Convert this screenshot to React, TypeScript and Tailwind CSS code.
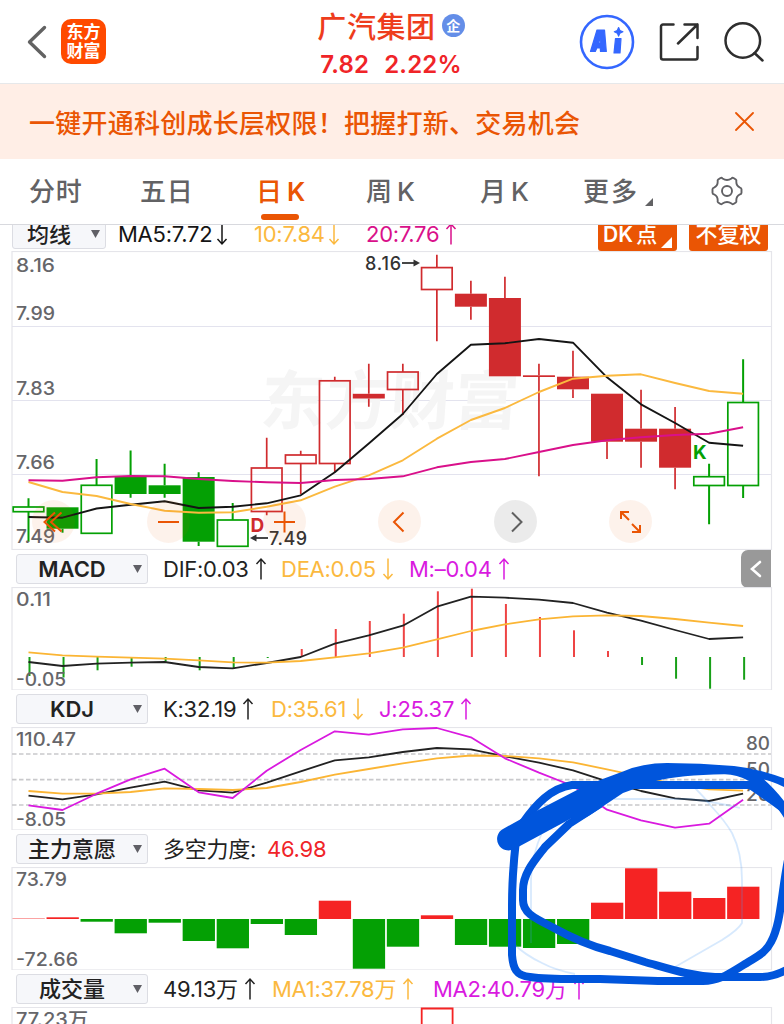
import React from "react";

const STEP = 34.03;
const cx = (i: number) => 28.5 + STEP * i;
const line = (ys: number[], offset = 0) =>
  ys.map((y, i) => `${(cx(i) + offset).toFixed(1)},${y}`).join(" ");

const GREEN = "#04a004";
const RED = "#d02b2e";
const ORANGE = "#ea5504";

type Candle = [number, number, number, number, "up" | "down", boolean];
// high, body top, body bottom, low, tone, hollow
const candles: Candle[] = [
  [498.3, 507, 511.7, 541.7, "down", true],
  [507.3, 507.3, 528.7, 532.7, "down", false],
  [459, 485.3, 533.3, 533.3, "down", true],
  [450.5, 476.7, 494, 497.7, "down", false],
  [463.7, 485.3, 494, 497.7, "down", false],
  [472.3, 477, 541.7, 546, "down", false],
  [503, 520, 546.3, 546.3, "down", true],
  [437.7, 468, 511.5, 515.3, "up", true],
  [450.7, 455, 463.5, 494, "up", true],
  [376.7, 380.8, 463.5, 472.3, "up", true],
  [363.7, 393.8, 398.5, 406.7, "up", false],
  [363.7, 372, 389.5, 415, "up", true],
  [254.7, 267.6, 289.5, 341.3, "up", true],
  [280.7, 293.7, 306.7, 319.7, "up", false],
  [276.7, 298, 376.3, 376.3, "up", false],
  [363.7, 375.3, 377, 476.3, "up", false],
  [350.7, 376.7, 389.3, 398, "up", false],
  [393.7, 393.7, 441.7, 459, "up", false],
  [389.7, 428.7, 441.7, 467.7, "up", false],
  [407, 428.7, 467.7, 489.3, "up", false],
  [463.7, 476.7, 485.5, 524.3, "down", true],
  [359.3, 402.5, 485.5, 498, "down", true],
];

const ma5 = [517, 517.7, 508.5, 504.7, 501.3, 508, 506.7, 503.3, 495.3, 472.3, 443.5, 414, 374, 344.7, 343.3, 339, 342.7, 377.3, 404.3, 423, 442.7, 445.7];
const ma10 = [482, 492, 496, 504, 510.7, 512.7, 512.3, 506.7, 500.3, 486.7, 475.3, 460.3, 438.7, 420, 408, 392, 378.7, 375.7, 374.3, 383, 391, 393.7];
const ma20 = [480.3, 480.7, 477.3, 476, 476.3, 479, 481, 482.3, 483, 480, 479, 476.3, 467.3, 462, 459, 452, 445, 440.3, 437.3, 435, 433.7, 427.3];

const macd = [676, 677.5, 670.3, 666.7, 661.7, 670.3, 669, 658, 649, 629, 621, 613.7, 591.3, 588.7, 604, 617, 630.3, 651, 665, 678.7, 688.7, 679.7];
const dif = [662, 666, 663.7, 662.7, 662, 667, 668.3, 663, 657, 643.7, 635.3, 625.7, 606.7, 596.7, 597.7, 599.7, 603, 612.7, 620.7, 630, 639, 637.3];
const dea = [652.3, 655.3, 656.7, 657.7, 658.7, 660.3, 662.3, 662.7, 661, 657.3, 653.3, 647.7, 639.3, 631, 624.3, 619.3, 616.3, 615.3, 616, 619, 622.7, 626];

const kLine = [795.7, 799.3, 794.3, 787.7, 781.7, 790.3, 792.7, 782.7, 771.3, 760.3, 757.3, 752, 748, 749.3, 756.3, 762.7, 770.3, 781.3, 791, 798.3, 801, 793.7];
const dLine = [791, 793.7, 793.7, 792, 788.3, 789, 790, 788, 782, 774.7, 769, 763.3, 758.3, 755.5, 756, 758.3, 762.3, 769.3, 776.7, 784.3, 789.3, 790.7];
const jLine = [805.3, 810, 793.7, 779.3, 768.7, 792.3, 798, 770.7, 750, 731.3, 734.7, 729.3, 728, 737.3, 758.3, 772.7, 786, 809.7, 820.3, 827.7, 823.7, 799.7];

const force = [918.3, 917.3, 921.7, 933.3, 922.7, 941, 948.3, 924, 935, 900.7, 968.7, 946.7, 915.3, 945, 946.7, 948, 944, 902.7, 868.3, 891.7, 898, 886.7];

function Label({ x, y, w, children, size = 18 }: { x: number; y: number; w: number; children: string; size?: number }) {
  return (
    <text x={x} y={y} textLength={w} fontSize={size} fontWeight={500} fill="#66666a" lengthAdjust="spacingAndGlyphs">
      {children}
    </text>
  );
}

function Plot({ top, height, children }: { top: number; height: number; children: React.ReactNode }) {
  return (
    <svg className="block shrink-0" width="784" height={height} viewBox={`0 ${top} 784 ${height}`}>
      {children}
    </svg>
  );
}

function Frame({ top, bottom }: { top: number; bottom: number }) {
  return <rect x="12" y={top + 0.5} width="759.5" height={bottom - top - 0.5} fill="none" stroke="#e5e5ea" strokeWidth="1.2" />;
}

function Arrow({ up = false }: { up?: boolean }) {
  return (
    <svg width="12" height="24" viewBox="0 0 12 24" fill="none" stroke="currentColor" strokeWidth="1.5" className="shrink-0">
      {up ? <path d="M6 22.500V2M1.500 7L6 2l4.500 5" /> : <path d="M6 1.500V22M1.500 17L6 22l4.500-5" />}
    </svg>
  );
}

function Value({ className, gap = "gap-1.5", dir, children }: { className: string; gap?: string; dir?: "up" | "down"; children: React.ReactNode }) {
  return (
    <div className={`flex shrink-0 items-center whitespace-nowrap text-[22px] leading-none tracking-[-0.25px] ${gap} ${className}`}>
      <span>{children}</span>
      {dir && <Arrow up={dir === "up"} />}
    </div>
  );
}

function Picker({ label, className = "w-[132px] ml-4 mr-[15px]", latin = false }: { label: string; className?: string; latin?: boolean }) {
  return (
    <button className={`relative flex h-[30px] shrink-0 items-center rounded-[3px] border border-[#dcdde3] bg-[#f6f7fa] text-[22px] leading-none text-[#222] ${className}`}>
      <span className={`flex-1 pr-[20px] text-center whitespace-nowrap ${latin ? "font-semibold" : "font-medium"}`}>{label}</span>
      <svg className="absolute right-[5px] top-[9px]" width="9" height="10" viewBox="0 0 9 10">
        <path d="M0 1h9L4.500 9z" fill="#606066" />
      </svg>
    </button>
  );
}

function Row({ children }: { children: React.ReactNode }) {
  return <div className="flex h-[37px] shrink-0 items-center">{children}</div>;
}

function Header() {
  return (
    <header className="flex h-[84px] shrink-0 items-center border-b border-[#e6e8ea] bg-white">
      <svg className="ml-[27px]" width="20" height="34" viewBox="0 0 20 34" fill="none" stroke="#626262" strokeWidth="3.4" strokeLinecap="round" strokeLinejoin="round">
        <path d="M17.500 2.500L2.500 17l15 14.500" />
      </svg>
      <div className="ml-[14px] flex h-[45px] w-[45px] flex-col items-center justify-center rounded-[10px] bg-[#ff4a00] text-[17px] font-bold leading-[19px] text-white">
        <span>东方</span>
        <span>财富</span>
      </div>
      <div className="ml-[200px] flex w-[170px] shrink-0 flex-col items-center">
        <div className="flex h-[40px] items-center gap-1.5">
          <span className="whitespace-nowrap pt-[3px] text-[29px] font-medium leading-none tracking-[0.6px] text-[#ee3c1c]">广汽集团</span>
          <span className="flex h-[23px] w-[23px] items-center justify-center rounded-full bg-[#648ee8] text-[14px] font-bold leading-none text-white">企</span>
        </div>
        <div className="flex h-[32px] items-center gap-[15px] pt-[6px] text-[24px] font-semibold leading-none tracking-[0.2px] text-[#f02428]">
          <span>7.82</span>
          <span>2.22%</span>
        </div>
      </div>
      <svg className="ml-[103px] shrink-0" width="56" height="56" viewBox="0 0 56 56">
        <circle cx="28" cy="28" r="26" fill="none" stroke="#3467ff" strokeWidth="2.600" />
        <g fill="#3467ff" stroke="#3467ff" strokeWidth="1.200" strokeLinejoin="round">
          <path fillRule="evenodd" d="M18 16h7.500l1.800 21.500h-5.800l-.2-3.500h-3.500L16.300 37.500h-4.800zM21 23.500l-1.800 5.500h2z" />
          <path d="M36.500 24.500h5.500l-1 14.500h-6z" />
          <path d="M39.600 13.500l1.300 3 3 1.300-3 1.300-1.300 3-1.300-3-3-1.300 3-1.300z" />
        </g>
      </svg>
      <svg className="ml-[24px] shrink-0" width="40" height="40" viewBox="0 0 40 40" fill="none" stroke="#2e2e2e" strokeWidth="2.500" strokeLinecap="round" strokeLinejoin="round">
        <path d="M14.500 2.500H4a2 2 0 0 0-2 2v31a2 2 0 0 0 2 2h32.500a2 2 0 0 0 2-2V25M25.500 2.500h13V16M38.500 2.500L19 21.500" />
      </svg>
      <svg className="ml-[24px] shrink-0" width="42" height="42" viewBox="0 0 42 42" fill="none" stroke="#2e2e2e" strokeWidth="2.500" strokeLinecap="round">
        <circle cx="19.800" cy="19.500" r="17.300" />
        <path d="M31.500 32l8 7.500" />
      </svg>
    </header>
  );
}

function Banner() {
  return (
    <div className="flex h-[75px] shrink-0 items-center justify-between bg-[#ffeee6] pl-[29px] pr-[30px] text-[#ea5504]">
      <span className="whitespace-nowrap pt-1 text-[26px] font-medium leading-none tracking-[0.25px]">一键开通科创成长层权限！把握打新、交易机会</span>
      <svg width="19" height="19" viewBox="0 0 19 19" stroke="currentColor" strokeWidth="1.800" strokeLinecap="round">
        <path d="M1 1l17 17M18 1L1 18" />
      </svg>
    </div>
  );
}

function Tabs() {
  const base = "shrink-0 whitespace-nowrap text-[26px] leading-none font-medium [word-spacing:-2px]";
  return (
    <nav className="flex h-[66px] shrink-0 items-center border-b border-[#d8d9de] bg-white pl-[29px] text-[#626264]">
      <span className={`${base} w-[111px] tracking-[0.8px]`}>分时</span>
      <span className={`${base} w-[116px] tracking-[0.8px]`}>五日</span>
      <div className="relative w-[110px] text-[#ea5504]">
        <div className={base}>日 <span className="font-semibold">K</span></div>
        <span className="absolute left-[5px] top-[35px] h-[6px] w-[38px] rounded-full bg-[#ea5504]" />
      </div>
      <span className={`${base} w-[114px]`}>周 K</span>
      <span className={`${base} w-[103px]`}>月 K</span>
      <span className={`${base} tracking-[2px]`}>更多</span>
      <svg className="ml-[6px] mt-[20px]" width="8" height="8" viewBox="0 0 8 8"><path d="M8 0v8H0z" fill="#626264" /></svg>
      <svg className="ml-[58px] -mt-[2px]" width="32" height="32" viewBox="0 0 32 32" fill="none" stroke="#606064" strokeWidth="1.900" strokeLinejoin="round">
        <path d="M11.500 3.500Q16 6.500 20.500 3.500Q21.300 2.400 22.500 3L24.800 4.500Q25.700 5.200 25.300 6.500Q25.200 11 29 12.600Q30.500 13 30.500 14.300V17.700Q30.500 19 29 19.400Q25.200 21 25.300 25.500Q25.700 26.800 24.800 27.500L22.500 29Q21.300 29.600 20.500 28.500Q16 25.500 11.500 28.500Q10.700 29.600 9.500 29L7.200 27.500Q6.300 26.800 6.700 25.500Q6.800 21 3 19.400Q1.500 19 1.500 17.700V14.300Q1.500 13 3 12.600Q6.800 11 6.700 6.500Q6.300 5.200 7.200 4.500L9.500 3Q10.700 2.400 11.500 3.500Z" />
        <circle cx="16" cy="16" r="5" />
      </svg>
    </nav>
  );
}

function CandleChart() {
  return (
    <Plot top={251} height={299}>
      <Frame top={251} bottom={549.500} />
      {[326.500, 400.500, 474.500].map((y) => (
        <path key={y} d={`M12 ${y}H771`} stroke="#e3e3ee" strokeWidth="1.200" />
      ))}
      <text x="261" y="424" fontSize="64" fontWeight={700} textLength="258" fill="#f5f5f5" transform="skewX(-4) translate(28 0)">东方财富</text>
      <Label x={16} y={272} w={39}>8.16</Label>
      <Label x={16} y={319.500} w={39}>7.99</Label>
      <Label x={16} y={394.500} w={39}>7.83</Label>
      <Label x={16} y={468.500} w={39}>7.66</Label>
      {candles.map(([h, t, b, l, tone, hollow], i) => {
        const c = tone === "up" ? RED : GREEN;
        const x = cx(i);
        return (
          <g key={i} stroke={c}>
            <path d={`M${x} ${h}V${t}M${x} ${b}V${l}`} strokeWidth={tone === "up" ? 1.7 : 2} />
            {hollow ? (
              <rect x={x - 15.3} y={t} width="30.600" height={b - t} fill="none" strokeWidth="1.700" />
            ) : (
              <rect x={x - 16} y={t} width="32" height={b - t} fill={c} stroke="none" />
            )}
          </g>
        );
      })}
      <Label x={16} y={542.500} w={39}>7.49</Label>
      <g fill="none" strokeWidth="1.900" strokeLinejoin="round">
        <polyline points={line(ma5)} stroke="#151515" />
        <polyline points={line(ma10)} stroke="#fbb93f" />
        <polyline points={line(ma20)} stroke="#d9108a" />
      </g>
      <text x="365" y="269.500" textLength="36" fontSize="18" fontWeight={500} fill="#333">8.16</text>
      <path d="M402 263h14" stroke="#333" strokeWidth="1.800" />
      <path d="M413.500 259.500l6.500 3.500-6.500 3.500z" fill="#333" />
      <text x="250.500" y="532" fontSize="19" fontWeight={700} fill={RED}>D</text>
      <text x="269" y="544.500" textLength="38" fontSize="18" fontWeight={500} fill="#333">7.49</text>
      <path d="M254 538h14" stroke="#333" strokeWidth="1.800" />
      <path d="M256.500 534.500l-6.500 3.500 6.500 3.500z" fill="#333" />
      <text x="693" y="459" fontSize="19" fontWeight={700} fill={GREEN}>K</text>
    </Plot>
  );
}

const controls = [
  "M23 12.500L12.500 22l10.500 9.500M29.500 12.500L19 22l10.500 9.500",
  "M11 22h21",
  "M11 22h21M21.500 11.500v21",
  "M25.500 12.500L16 22l9.500 9.500",
  "M18 12.500l9.500 9.500-9.500 9.500",
  "M12 19V12h8M12 12l8 8M31 25v7h-8M31 32l-8-8",
];

function ChartControls() {
  return (
    <div className="absolute left-[32px] top-[249px] flex w-[620px] justify-between">
      {controls.map((d, i) => (
        <button key={i} className={`h-[43px] w-[43px] rounded-full ${i === 4 ? "bg-[#000000]/8 text-[#606060]" : "bg-[#ea5504]/8 text-[#ea5504]"}`}>
          <svg width="43" height="43" viewBox="0 0 43 43" fill="none" stroke="currentColor" strokeWidth="2">
            <path d={d} />
          </svg>
        </button>
      ))}
    </div>
  );
}

function MacdChart() {
  return (
    <Plot top={587} height={103}>
      <Frame top={587} bottom={690} />
      <Label x={16} y={606} w={35}>0.11</Label>
      {macd.map((y, i) => (
        <path key={i} d={`M${cx(i) + 1} 657V${y}`} stroke={y < 657 ? "#ee4444" : "#18a018"} strokeWidth="2" />
      ))}
      <Label x={16} y={685.500} w={50}>-0.05</Label>
      <g fill="none" strokeWidth="1.800" strokeLinejoin="round">
        <polyline points={line(dif)} stroke="#222" />
        <polyline points={line(dea)} stroke="#fbb534" />
      </g>
    </Plot>
  );
}

function KdjChart() {
  return (
    <Plot top={727} height={103}>
      <Frame top={727} bottom={830} />
      {[754, 779.600, 805].map((y) => (
        <path key={y} d={`M12 ${y}H771`} stroke="#c9c9cc" strokeWidth="1.700" strokeDasharray="4.500 2.500" />
      ))}
      <Label x={16} y={746} w={60}>110.47</Label>
      <Label x={16} y={825.500} w={50}>-8.05</Label>
      <Label x={746} y={750} w={24}>80</Label>
      <Label x={746} y={776} w={24}>50</Label>
      <Label x={746} y={801} w={24}>20</Label>
      <g fill="none" strokeWidth="1.800" strokeLinejoin="round">
        <polyline points={line(kLine)} stroke="#222" />
        <polyline points={line(dLine)} stroke="#fbb534" />
        <polyline points={line(jLine)} stroke="#d91adf" />
      </g>
    </Plot>
  );
}

function ForceChart() {
  return (
    <Plot top={867} height={103}>
      <Frame top={867} bottom={970} />
      <Label x={16} y={886} w={51}>73.79</Label>
      <Label x={16} y={965.500} w={62}>-72.66</Label>
      {force.map((y, i) => (
        <rect
          key={i}
          x={cx(i) - 16}
          y={Math.min(y, 919)}
          width="32.300"
          height={Math.abs(y - 919)}
          fill={y < 919 ? "#f52323" : GREEN}
          opacity={i === 0 ? 0.6 : 1}
        />
      ))}
    </Plot>
  );
}

function VolumeChart() {
  return (
    <Plot top={1007} height={17}>
      <path d="M12 1030V1007.500H771.500V1030" fill="none" stroke="#e5e5ea" strokeWidth="1.200" />
      <Label x={16} y={1026} w={72}>77.23万</Label>
      <path d="M421.700 1030V1008.500H452.600V1030" fill="none" stroke="#f52323" strokeWidth="1.800" />
    </Plot>
  );
}

function Annotation() {
  return (
    <svg className="pointer-events-none absolute left-0 top-0" width="784" height="1024" viewBox="0 0 784 1024" fill="none">
      <g stroke="#4a9af5" strokeOpacity="0.220" strokeWidth="1.800">
        <path d="M695 788Q704 797 712 807Q725 821 732 833Q742 853 742 880V923Q738 930 722 940L675 967" />
        <path d="M543 830Q531 857 531 880V943" />
        <path d="M514 944Q525 955 542 963Q555 970 575 974" />
        <path d="M614 799L690 799Q720 803 740 808" />
      </g>
      <g stroke="#0055dc" strokeWidth="8" strokeLinejoin="round">
        <path d="M516 840C514 858 512 880 512 905V955C513 968 516 976 530 977C550 980 575 979 600 979L658 981H703C720 981 730 973 745 964C760 955 766 952 771 942C781 924 781 895 788 860" />
        <path d="M600 804L569 824L545 847C535 860 523 873 523 890V900C523 912 532 917 552 927C570 937 590 946 610 951L645 962C670 969 690 976 715 977H760Q774 977 788 969" />
        <path d="M522 824C536 804 551 788 572 785H750Q768 797 788 812" />
      </g>
      <path fill="#0055dc" d="M503 829L521 819L578 789.500L600 780L623 771.500Q642 763 667 763Q700 763 734 766Q762 769 788 780V789Q775 782 764 779.500Q775 789 788 806V824Q780 811 774 804Q765 798 752 789H634L623 793L590 815L567 828L572 818L520 846L514 849A11.300 11.300 0 0 1 503 829ZM656 781H749Q736 774 724 774.300Q680 775 656 781Z" fillRule="evenodd" />
    </svg>
  );
}

export default function App() {
  return (
    <div
      lang="zh-CN"
      className="relative flex h-[1024px] w-[784px] flex-col overflow-hidden bg-white font-['Inter','Noto_Sans_CJK_SC',sans-serif]"
    >
      <Header />
      <Banner />
      <Tabs />
      <div className="flex h-[26px] shrink-0 overflow-hidden">
        <div className="-mt-[7px] flex h-[32px] items-center">
          <Picker label="均线" className="ml-[12px] mr-[12px] w-[94px]" />
          <Value className="w-[136px] text-[#151515]" gap="gap-[4px]" dir="down">MA5:7.72</Value>
          <Value className="w-[112px] text-[#fbb93f]" gap="gap-[3px]" dir="down">10:7.84</Value>
          <Value className="w-[232px] text-[#d9108a]" gap="gap-[6px]" dir="up">20:7.76</Value>
          <button className="relative mr-[12px] flex h-[33px] w-[79px] items-center rounded-[3px] bg-[#ea5504] pl-[5px] text-[21px] font-medium leading-none text-white">
            <span className="whitespace-nowrap font-semibold [word-spacing:-2px]">DK <span className="font-medium">点</span></span>
            <svg className="absolute bottom-[3px] right-[5px]" width="11" height="11" viewBox="0 0 11 11"><path d="M11 0v11H0z" fill="#fff" /></svg>
          </button>
          <button className="flex h-[33px] w-[79px] items-center justify-center whitespace-nowrap rounded-[3px] bg-[#ea5504] text-[22px] font-medium leading-none text-white">不复权</button>
        </div>
      </div>
      <div className="relative shrink-0">
        <CandleChart />
        <ChartControls />
      </div>
      <Row>
        <Picker label="MACD" latin />
        <Value className="w-[118px] text-[#222]" dir="up">DIF:0.03</Value>
        <Value className="w-[128px] text-[#fbb93f]" dir="down">DEA:0.05</Value>
        <Value className="w-[332px] text-[#d91adf]" dir="up">M:–0.04</Value>
        <button className="flex h-[38px] w-[30px] items-center justify-center rounded-l-[7px] bg-[#999]">
          <svg width="12" height="18" viewBox="0 0 12 18" fill="none" stroke="#fff" strokeWidth="2.600" strokeLinecap="round"><path d="M10 2L2 9l8 7" /></svg>
        </button>
      </Row>
      <MacdChart />
      <Row>
        <Picker label="KDJ" latin />
        <Value className="w-[108px] text-[#222]" dir="up">K:32.19</Value>
        <Value className="w-[108px] text-[#fbb93f]" dir="down">D:35.61</Value>
        <Value className="text-[#d91adf]" dir="up">J:25.37</Value>
      </Row>
      <KdjChart />
      <Row>
        <Picker label="主力意愿" />
        <Value className="w-[104px] text-[#222]">多空力度:</Value>
        <Value className="text-[#f02428]">46.98</Value>
      </Row>
      <ForceChart />
      <Row>
        <Picker label="成交量" />
        <Value className="w-[109px] text-[#222]" dir="up">49.13万</Value>
        <Value className="w-[161px] text-[#fbb93f]" dir="up">MA1:37.78万</Value>
        <Value className="text-[#d91adf]" dir="up">MA2:40.79万</Value>
      </Row>
      <VolumeChart />
      <Annotation />
    </div>
  );
}
